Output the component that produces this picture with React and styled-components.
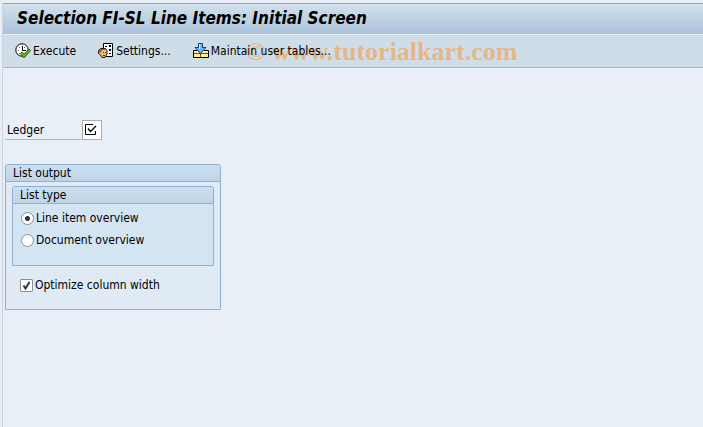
import React, { useState } from 'react';
import styled, { createGlobalStyle } from 'styled-components';

const GlobalStyle = createGlobalStyle`
  * {
    box-sizing: border-box;
  }

  body {
    margin: 0;
    background: #e8eff7;
    color: #000;
    font-family: Tahoma, 'DejaVu Sans Condensed', 'DejaVu Sans', sans-serif;
    font-size: 12px;
    line-height: 16px;
  }
`;

const Screen = styled.div`
  min-height: 100vh;
  padding: 3px 0 0 2px;
`;

const Panel = styled.div`
  min-height: calc(100vh - 3px);
  border-left: 1px solid #cbd5e0;
`;

const TitleBar = styled.header`
  height: 32px;
  padding: 0 14px;
  border-top: 1px solid #97a6b8;
  border-bottom: 1px solid #e8eff7;
  background: linear-gradient(#d3e1ee, #bfd2e0 50%, #abc3dd);
`;

const Title = styled.h1`
  margin: 0;
  font-size: 17px;
  font-style: italic;
  font-weight: bold;
  line-height: 28px;
  white-space: nowrap;
`;

const Toolbar = styled.div`
  position: relative;
  display: flex;
  align-items: center;
  gap: 22px;
  height: 33px;
  padding: 0 12px;
  border-bottom: 1px solid #a5b7c6;
  background: #cfdde8;
`;

const ToolButton = styled.button`
  position: relative;
  display: flex;
  align-items: center;
  gap: 2px;
  padding: 0;
  border: 0;
  background: none;
  color: #000;
  font: inherit;
  white-space: nowrap;
  cursor: pointer;
`;

const Watermark = styled.span`
  position: absolute;
  left: 243px;
  top: 3px;
  color: #e5b788;
  font-family: 'Liberation Serif', serif;
  font-size: 26px;
  font-weight: bold;
  line-height: 28px;
  white-space: nowrap;
  pointer-events: none;
`;

const Content = styled.main`
  padding: 52px 2px 0;
`;

const FieldRow = styled.div`
  display: flex;
  align-items: flex-end;
  height: 20px;
  margin-bottom: 24px;
`;

const FieldLabel = styled.label`
  width: 77px;
  height: 19px;
  padding-left: 2px;
  border-bottom: 1px solid #b0b7bd;
  line-height: 18px;
`;

const FieldBox = styled.div`
  position: relative;
  width: 20px;
  height: 20px;
`;

const FieldInput = styled.input`
  display: block;
  width: 100%;
  height: 100%;
  padding: 0 2px;
  border: 1px solid #a9aeb3;
  outline: 0;
  background: #fff;
  font: inherit;
`;

const RequiredMark = styled.svg`
  position: absolute;
  left: 3px;
  top: 4px;
  pointer-events: none;
`;

const Group = styled.fieldset`
  min-width: 0;
  margin: 0;
  padding: 0;
  border: 1px solid #8fb0d0;
  border-radius: 3px 3px 0 0;
  background: ${(props) => (props.$inner ? '#d3e4f2' : '#dfeaf4')};
`;

const OutputGroup = styled(Group)`
  width: 216px;
  height: 146px;
`;

const GroupTitle = styled.legend`
  float: left;
  width: 100%;
  height: 17px;
  padding: 0 7px;
  border-bottom: 1px solid #8fb0d0;
  border-radius: 2px 2px 0 0;
  background: linear-gradient(#cddff0, #bdd4e7);
  line-height: 16px;
`;

const GroupBody = styled.div`
  clear: both;
  padding: ${(props) => (props.$inner ? '3px 8px 14px' : '4px 6px 0')};
`;

const Option = styled.label`
  display: flex;
  align-items: center;
  gap: 2px;
  height: 22px;
  white-space: nowrap;
`;

const Radio = styled.input`
  appearance: none;
  width: 13px;
  height: 13px;
  margin: 0;
  border: 1px solid #8b8f94;
  border-radius: 50%;
  background: #fff;

  &:checked {
    background: radial-gradient(circle, #2f3048 0 2px, #fff 3px);
  }
`;

const CheckboxRow = styled(Option)`
  margin-top: 8px;
  padding-left: 8px;
`;

const Tick = styled.span`
  position: relative;
  display: flex;
`;

const Checkbox = styled.input`
  appearance: none;
  width: 13px;
  height: 13px;
  margin: 0;
  border: 1px solid #8b8f94;
  border-radius: 1px;
  background: #fff;

  & + svg {
    position: absolute;
    left: 0;
    top: 0;
    visibility: hidden;
    pointer-events: none;
  }

  &:checked + svg {
    visibility: visible;
  }
`;

const ExecuteIcon = () => (
  <svg width="16" height="16" viewBox="0 0 16 16" aria-hidden="true">
    <circle cx="7" cy="7" r="6.2" fill="#fff" stroke="#000" />
    <path d="M7.5 3v4.5H11" fill="none" stroke="#000" />
    <path d="M3 7.5h1M4 4.500h1M9 4.500h1M4 10.500h1" stroke="#666" />
    <path d="M5.500 10.500L7 9l2 2 5-5 1.500 1.500L9.500 14.500h-1z" fill="#5cb82f" stroke="#16450e" strokeWidth="0.8" />
  </svg>
);

const SettingsIcon = () => (
  <svg width="16" height="16" viewBox="0 0 16 16" aria-hidden="true">
    <path d="M5.500.500h9v13h-9z" fill="#fff" stroke="#000" />
    <path d="M7 3h2v1H7zM11 2h2v2h-2zM11 6h2v2h-2zM11 10h2v1h-2z" fill="#000" />
    <path d="M2.500 5.500h5l1.500 2v3.500l-2 3.500H4L2.500 12 .500 10.500v-3z" fill="#edbb86" stroke="#2b1808" />
    <path d="M1 7.500L3 6h4.500v1H4L3 9.500H1z" fill="#9a602e" />
    <path d="M5 9h1v1H5zM7 9h1v1H7zM5 12h2v1H5z" fill="#63391a" />
  </svg>
);

const MaintainIcon = () => (
  <svg width="16" height="16" viewBox="0 0 16 16" aria-hidden="true">
    <path d="M.500 7.500h15v7H.500z" fill="#ffed9c" stroke="#000" />
    <path d="M1 10.500h14M7.500 10v4" stroke="#605421" />
    <path d="M1 8.500h14" stroke="#fffbe0" />
    <path d="M5.500.500h4v4h3.500L7.500 10.500 2 4.500h3.500z" fill="#6fb8f5" stroke="#143c6c" />
    <path d="M6.500 1v5" stroke="#cdeaff" />
  </svg>
);

const tools = [
  { label: 'Execute', Icon: ExecuteIcon },
  { label: 'Settings...', Icon: SettingsIcon },
  { label: 'Maintain user tables...', Icon: MaintainIcon },
];

const listTypes = [
  { value: 'line', label: 'Line item overview' },
  { value: 'document', label: 'Document overview' },
];

const App = () => {
  const [ledger, setLedger] = useState('');
  const [listType, setListType] = useState('line');
  const [optimize, setOptimize] = useState(true);

  return (
    <>
      <GlobalStyle />
      <Screen>
        <Panel>
          <TitleBar>
            <Title>Selection FI-SL Line Items: Initial Screen</Title>
          </TitleBar>
          <Toolbar>
            <Watermark>© www.tutorialkart.com</Watermark>
            {tools.map(({ label, Icon }) => (
              <ToolButton key={label} type="button">
                <Icon />
                {label}
              </ToolButton>
            ))}
          </Toolbar>

          <Content>
            <FieldRow>
              <FieldLabel htmlFor="ledger">Ledger</FieldLabel>
              <FieldBox>
                <FieldInput
                  id="ledger"
                  required
                  value={ledger}
                  onChange={(e) => setLedger(e.target.value)}
                />
                {!ledger && (
                  <RequiredMark width="12" height="12" viewBox="0 0 12 12" aria-hidden="true">
                    <path d="M8 .500H.500v10h10V7" fill="none" stroke="#000" />
                    <path d="M3 4.500l2.500 3L11 2" fill="none" stroke="#000" strokeWidth="1.3" />
                  </RequiredMark>
                )}
              </FieldBox>
            </FieldRow>

            <OutputGroup>
              <GroupTitle>List output</GroupTitle>
              <GroupBody>
                <Group $inner>
                  <GroupTitle>List type</GroupTitle>
                  <GroupBody $inner>
                    {listTypes.map(({ value, label }) => (
                      <Option key={value}>
                        <Radio
                          type="radio"
                          name="listType"
                          value={value}
                          checked={listType === value}
                          onChange={() => setListType(value)}
                        />
                        {label}
                      </Option>
                    ))}
                  </GroupBody>
                </Group>
                <CheckboxRow>
                  <Tick>
                    <Checkbox
                      type="checkbox"
                      checked={optimize}
                      onChange={(e) => setOptimize(e.target.checked)}
                    />
                    <svg width="13" height="13" viewBox="0 0 13 13" aria-hidden="true">
                      <path d="M3.500 6.500L5.500 9.500L9.500 3" fill="none" stroke="#2f3048" strokeWidth="2" />
                    </svg>
                  </Tick>
                  Optimize column width
                </CheckboxRow>
              </GroupBody>
            </OutputGroup>
          </Content>
        </Panel>
      </Screen>
    </>
  );
};

export default App;
